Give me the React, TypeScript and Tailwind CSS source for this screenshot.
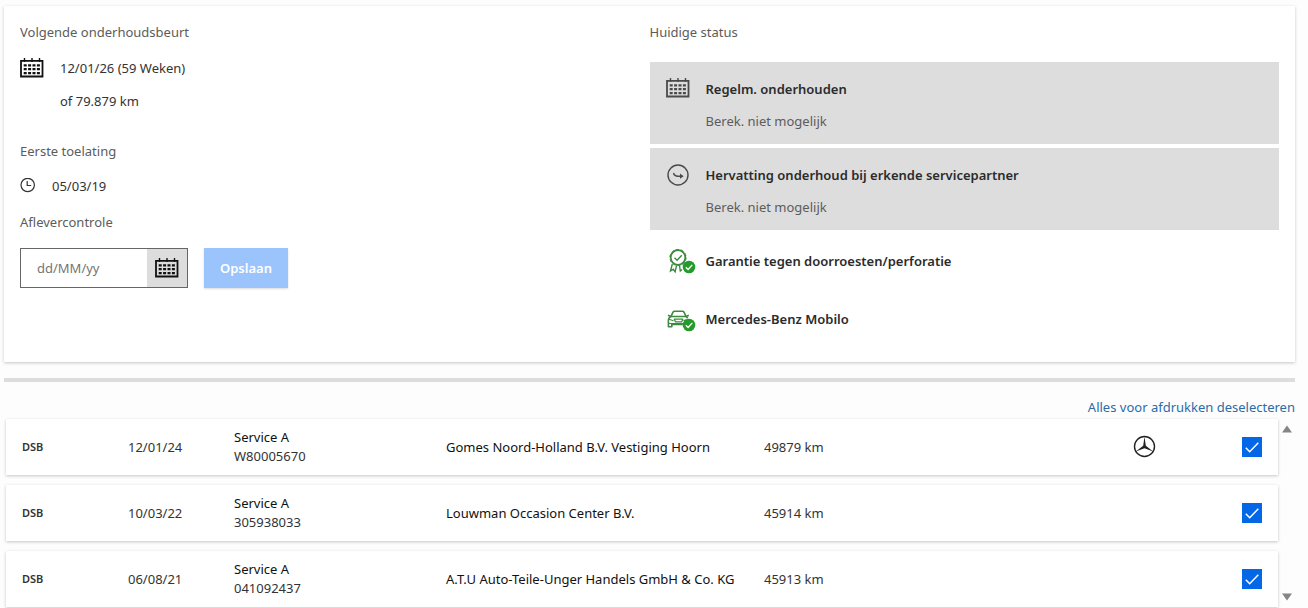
import { useState } from 'react';
import type { ReactNode } from 'react';

interface ServiceRecord {
  id: string;
  source: string;
  date: string;
  service: string;
  dealer: string;
  mileage: string;
  official: boolean;
}

const RECORDS: ServiceRecord[] = [
  {
    id: 'W80005670',
    source: 'DSB',
    date: '12/01/24',
    service: 'Service A',
    dealer: 'Gomes Noord-Holland B.V. Vestiging Hoorn',
    mileage: '49879 km',
    official: true,
  },
  {
    id: '305938033',
    source: 'DSB',
    date: '10/03/22',
    service: 'Service A',
    dealer: 'Louwman Occasion Center B.V.',
    mileage: '45914 km',
    official: false,
  },
  {
    id: '041092437',
    source: 'DSB',
    date: '06/08/21',
    service: 'Service A',
    dealer: 'A.T.U Auto-Teile-Unger Handels GmbH & Co. KG',
    mileage: '45913 km',
    official: false,
  },
];

function CalendarIcon({ className }: { className?: string }) {
  return (
    <svg viewBox="0 0 24 20" className={`h-5 w-6 shrink-0 ${className ?? ''}`} fill="none" aria-hidden="true">
      <path d="M1 2.900h21.500v15.600H1z" stroke="currentColor" strokeWidth="1.800" />
      <path d="M4.500 0v4M12 0v4M19.500 0v4" stroke="currentColor" strokeWidth="1.400" />
      <path
        d="M3.700 7.300h16.200M3.700 11.200h16.200M3.700 15.100h16.200"
        stroke="currentColor"
        strokeWidth="2.200"
        strokeDasharray="3 1.400"
      />
    </svg>
  );
}

function ClockIcon() {
  return (
    <svg viewBox="0 0 16 16" className="h-4 w-4 shrink-0 text-[#333333]" fill="none" stroke="currentColor" aria-hidden="true">
      <circle cx="7.700" cy="7" r="6.700" strokeWidth="1.200" />
      <path d="M7.200 3v4.500h4" strokeWidth="1.200" />
    </svg>
  );
}

function ResumeIcon() {
  return (
    <svg viewBox="0 0 24 24" className="h-6 w-6 shrink-0 text-[#4a4a4a]" fill="none" stroke="currentColor" aria-hidden="true">
      <circle cx="12" cy="11" r="10" strokeWidth="1.400" />
      <path d="M7.500 9c.6 2.200 2 3.200 4.500 3.200h4.500" strokeWidth="1.400" />
      <path d="M14 9.500l3.600 2.700-3.600 2.500z" fill="currentColor" stroke="none" />
    </svg>
  );
}

function OkBadge() {
  return (
    <>
      <circle cx="23" cy="18" r="6.300" fill="#249b2b" />
      <path d="M19.800 18.300l2.300 2.200 4.200-4.600" stroke="#ffffff" strokeWidth="1.300" fill="none" />
    </>
  );
}

function WarrantyIcon() {
  return (
    <svg viewBox="0 0 30 25" className="h-[25px] w-[30px] shrink-0" fill="none" aria-hidden="true">
      <g stroke="#3b8a3e" strokeWidth="1.500">
        <circle cx="12" cy="8.500" r="7.300" strokeWidth="1.700" />
        <circle cx="12" cy="8.500" r="8.100" strokeWidth="1" strokeDasharray="3.200 1.900" />
        <path d="M8.500 8.700l2.600 2.500 4.700-5" strokeWidth="1.400" />
        <path d="M6.300 15l-1.800 7 2.800-1.800 1.800 2.600 1.500-6.500M13.500 16.500l.8 5.500 1.800-1.500" strokeWidth="1.400" />
      </g>
      <OkBadge />
    </svg>
  );
}

function MobiloIcon() {
  return (
    <svg viewBox="0 0 30 25" className="h-[25px] w-[30px] shrink-0" fill="none" aria-hidden="true">
      <g stroke="#3b8a3e" strokeWidth="1.600" strokeLinejoin="round">
        <path d="M5 9.500l2-4.300c.3-.7.800-1 1.500-1h8c.7 0 1.200.3 1.500 1l2 4.300" />
        <path d="M2 8.200l3 1.300h15l2.800-1.300" />
        <path d="M5 9.500c-1.700.8-2.600 1.800-2.600 3.300v7h3.400v-2.300h11M20 9.500l1.800 1.800" />
        <path d="M3 12.300l4.500 1.500M8.300 12.200h8.500l-1.200 2.700H9.500zM17.500 13.800l3-1.200M3 16.500h14" strokeWidth="1.200" />
      </g>
      <OkBadge />
    </svg>
  );
}

function StarIcon() {
  return (
    <svg viewBox="0 0 24 24" className="ml-auto block h-6 w-6 text-[#222222]" role="img" aria-label="Mercedes-Benz">
      <circle cx="12.500" cy="11.500" r="10" fill="none" stroke="currentColor" strokeWidth="1.400" />
      <path d="M12.500 1.500l1.300 9.200 7.400 5.900-8.700-3.300-8.700 3.300 7.400-5.900z" fill="currentColor" />
    </svg>
  );
}

function StatusItem({ icon, title, note }: { icon: ReactNode; title: string; note?: string }) {
  return (
    <li className={note ? 'flex gap-4 bg-[#dddddd] px-4 pt-4 pb-3' : 'flex h-[54px] items-center gap-[10px] px-4'}>
      {icon}
      <div className="leading-[22px]">
        <h3 className="font-semibold text-[#2b2b2b]">{title}</h3>
        {note && <p className="mt-[10px] text-[#5c5c5c]">{note}</p>}
      </div>
    </li>
  );
}

function PrintCheckbox({ label, checked, onChange }: { label: string; checked: boolean; onChange: () => void }) {
  return (
    <label className="relative ml-auto block h-5 w-5">
      <input
        type="checkbox"
        aria-label={label}
        checked={checked}
        onChange={onChange}
        className="peer block h-5 w-5 appearance-none border border-[#0467e5] bg-white checked:bg-[#0467e5]"
      />
      <svg
        viewBox="0 0 20 20"
        className="pointer-events-none absolute inset-0 hidden peer-checked:block"
        fill="none"
        stroke="#ffffff"
        strokeWidth="1.500"
        aria-hidden="true"
      >
        <path d="M3.800 10.800l3.900 3.900 8.600-8.900" />
      </svg>
    </label>
  );
}

export default function App() {
  const [deliveryDate, setDeliveryDate] = useState('');
  const [selected, setSelected] = useState<string[]>(RECORDS.map((r) => r.id));

  const toggle = (id: string) => {
    setSelected((prev) => (prev.includes(id) ? prev.filter((x) => x !== id) : [...prev, id]));
  };

  return (
    <div className="min-h-screen bg-[#fdfdfd] pt-1.5 pr-[13px] pl-1 font-['Noto_Sans',sans-serif] text-[13px] leading-5 text-[#333333]">
      <section className="grid grid-cols-2 bg-white p-4 shadow-[0_1px_3px_rgba(0,0,0,0.22)]">
        <div>
          <h2 className="text-[#5c5c5c]">Volgende onderhoudsbeurt</h2>
          <div className="mt-4 flex gap-4">
            <CalendarIcon className="text-[#111111]" />
            <div>
              <p>12/01/26 (59 Weken)</p>
              <p className="mt-[13px]">of 79.879 km</p>
            </div>
          </div>
          <h2 className="mt-[30px] text-[#5c5c5c]">Eerste toelating</h2>
          <div className="mt-[15px] flex items-center gap-4">
            <ClockIcon />
            <p>05/03/19</p>
          </div>
          <label htmlFor="delivery-date" className="mt-4 block text-[#5c5c5c]">
            Aflevercontrole
          </label>
          <form className="mt-4 flex gap-4" onSubmit={(e) => e.preventDefault()}>
            <div className="flex h-10 w-42 border border-[#666666]">
              <input
                id="delivery-date"
                type="text"
                placeholder="dd/MM/yy"
                value={deliveryDate}
                onChange={(e) => setDeliveryDate(e.target.value)}
                className="min-w-0 flex-1 bg-white px-4 outline-none placeholder:text-[#757575]"
              />
              <button type="button" aria-label="Kalender openen" className="flex w-10 items-center justify-center bg-[#dddddd] text-[#111111]">
                <CalendarIcon />
              </button>
            </div>
            <button type="submit" className="h-10 bg-[#9ac4fb] px-4 font-semibold text-white shadow-[0_1px_2px_rgba(0,0,0,0.15)]">
              Opslaan
            </button>
          </form>
        </div>

        <div>
          <h2 className="text-[#5c5c5c]">Huidige status</h2>
          <ul className="mt-5 flex flex-col gap-1">
            <StatusItem
              icon={<CalendarIcon className="text-[#4a4a4a]" />}
              title="Regelm. onderhouden"
              note="Berek. niet mogelijk"
            />
            <StatusItem
              icon={<ResumeIcon />}
              title="Hervatting onderhoud bij erkende servicepartner"
              note="Berek. niet mogelijk"
            />
            <StatusItem icon={<WarrantyIcon />} title="Garantie tegen doorroesten/perforatie" />
            <StatusItem icon={<MobiloIcon />} title="Mercedes-Benz Mobilo" />
          </ul>
        </div>
      </section>

      <hr className="mt-4 border-t-4 border-[#dddddd]" />

      <div className="mt-[15px] text-right">
        <a
          href="#records"
          className="text-[#2a6ca8]"
          onClick={(e) => {
            e.preventDefault();
            setSelected([]);
          }}
        >
          Alles voor afdrukken deselecteren
        </a>
      </div>

      <div id="records" className="flex pl-0.5">
        <div className="-mt-2 -mb-[10px] flex-1">
          <table className="w-full table-fixed border-separate border-spacing-x-0 border-spacing-y-[10px]">
            <colgroup>
              <col className="w-1/12" />
              <col className="w-1/12" />
              <col className="w-1/6" />
              <col className="w-1/4" />
              <col className="w-1/4" />
              <col className="w-1/12" />
              <col className="w-1/12" />
            </colgroup>
            <tbody>
              {RECORDS.map((r) => (
                <tr key={r.id} className="h-14 bg-white shadow-[0_1px_3px_rgba(0,0,0,0.22)]">
                  <td className="px-4 text-[11px] font-semibold">{r.source}</td>
                  <td className="px-4">{r.date}</td>
                  <td className="px-4 leading-[19px]">
                    <p className="text-[#111111]">{r.service}</p>
                    <p>{r.id}</p>
                  </td>
                  <td className="px-4 whitespace-nowrap text-[#111111]">{r.dealer}</td>
                  <td className="px-4">{r.mileage}</td>
                  <td className="px-4">{r.official && <StarIcon />}</td>
                  <td className="px-4">
                    <PrintCheckbox
                      label={`${r.service} ${r.id}`}
                      checked={selected.includes(r.id)}
                      onChange={() => toggle(r.id)}
                    />
                  </td>
                </tr>
              ))}
            </tbody>
          </table>
        </div>
        <div className="flex w-[17px] flex-col items-center justify-between pt-2 pb-1.5">
          <button type="button" aria-label="Omhoog">
            <svg viewBox="0 0 10 8" className="block h-2 w-2.5" fill="#858585">
              <path d="M5 0.500l5 7H0z" />
            </svg>
          </button>
          <button type="button" aria-label="Omlaag">
            <svg viewBox="0 0 10 8" className="block h-2 w-2.5" fill="#858585">
              <path d="M5 7.500l-5-7h10z" />
            </svg>
          </button>
        </div>
      </div>
    </div>
  );
}
